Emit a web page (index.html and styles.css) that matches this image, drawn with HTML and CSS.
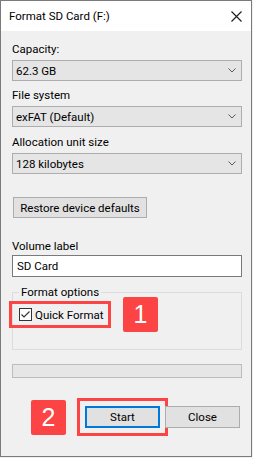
FILE: index.html
```html
<!DOCTYPE html>
<html lang="en">
<head>
  <meta charset="UTF-8">
  <title>Format SD Card (F:)</title>
  <link rel="stylesheet" href="styles.css">
</head>
<body>
  <div class="window">
    <div class="titlebar">
      <span class="title">Format SD Card (F:)</span>
      <svg class="close" width="11" height="11" viewBox="0 0 11 11">
        <path d="M0.5 0.5 L10.5 10.5 M10.5 0.5 L0.5 10.5" stroke="#1a1a1a" stroke-width="1.1" fill="none"/>
      </svg>
    </div>
    <div class="content">
      <div class="field">
        <div class="label">Capacity:</div>
        <div class="select"><span>62.3 GB</span>
          <svg width="8" height="5" viewBox="0 0 8 5"><path d="M0.5 0.5 L4 4 L7.5 0.5" stroke="#5a5a5a" fill="none"/></svg>
        </div>
      </div>
      <div class="field second">
        <div class="label">File system</div>
        <div class="select"><span>exFAT (Default)</span>
          <svg width="8" height="5" viewBox="0 0 8 5"><path d="M0.5 0.5 L4 4 L7.5 0.5" stroke="#5a5a5a" fill="none"/></svg>
        </div>
      </div>
      <div class="field third">
        <div class="label">Allocation unit size</div>
        <div class="select"><span>128 kilobytes</span>
          <svg width="8" height="5" viewBox="0 0 8 5"><path d="M0.5 0.5 L4 4 L7.5 0.5" stroke="#5a5a5a" fill="none"/></svg>
        </div>
      </div>
      <button class="btn restore">Restore device defaults</button>
      <div class="field volume">
        <div class="label">Volume label</div>
        <div class="textbox">SD Card</div>
      </div>
      <fieldset class="options">
        <legend>Format options</legend>
        <div class="opt-row">
          <span class="check">
            <svg width="13" height="13" viewBox="0 0 13 13">
              <rect x="0.5" y="0.5" width="12" height="12" fill="#fff" stroke="#333"/>
              <path d="M2.5 6.5 L5 9 L10.5 3.5" stroke="#333" stroke-width="1.2" fill="none"/>
            </svg>
            <span class="check-text">Quick Format</span>
          </span>
          <span class="badge">1</span>
        </div>
      </fieldset>
      <div class="progress"></div>
      <div class="actions">
        <span class="badge">2</span>
        <button class="btn start">Start</button>
        <button class="btn close-btn">Close</button>
      </div>
    </div>
  </div>
</body>
</html>
```

FILE: styles.css
```css
body {
  margin: 0;
  background: #f0f0f0;
  font-family: 'Roboto', 'Liberation Sans', sans-serif;
  font-size: 11.5px;
  color: #000;
}
.window {
  width: 252px;
  height: 457px;
  box-sizing: border-box;
  border: 1px solid #7a7a7a;
  background: #f0f0f0;
}
.titlebar {
  height: 30px;
  background: #fff;
  display: flex;
  align-items: center;
  justify-content: space-between;
  padding: 0 9px 0 8px;
}
.title {
  font-size: 11.5px;
  line-height: 30px;
}
.close {
  display: block;
  margin-top: 1px;
}
.content {
  padding: 11px 0 0 11px;
}
.label {
  line-height: 15px;
  height: 15px;
}
.select {
  margin-top: 3px;
  width: 230px;
  height: 21px;
  box-sizing: border-box;
  border: 1px solid #adadad;
  background: #e5e5e5;
  display: flex;
  align-items: center;
  justify-content: space-between;
  padding: 0 5px 0 3px;
}
.select svg {
  display: block;
}
.second {
  margin-top: 7px;
}
.third {
  margin-top: 8px;
}
.btn {
  font-family: inherit;
  font-size: 11.5px;
  color: #000;
  background: #e1e1e1;
  border: 1px solid #adadad;
  border-radius: 0;
  padding: 0;
  box-sizing: border-box;
  display: block;
}
.restore {
  margin-top: 23px;
  margin-left: 1px;
  width: 134px;
  height: 21px;
}
.volume {
  margin-top: 21px;
}
.textbox {
  margin-top: 1px;
  width: 230px;
  height: 22px;
  box-sizing: border-box;
  border: 1px solid #7a7a7a;
  background: #fff;
  padding-left: 4px;
  line-height: 20px;
}
.options {
  margin: 7px 0 0 0;
  padding: 0 0 17px 0;
  width: 230px;
  box-sizing: border-box;
  border: 1px solid #dcdcdc;
  min-inline-size: 0;
}
.options legend {
  margin-left: 6px;
  padding: 0 2px;
  line-height: 17px;
  height: 17px;
}
.opt-row {
  margin-top: -4px;
  display: flex;
  align-items: center;
  height: 35px;
}
.check {
  margin-left: -1px;
  width: 96px;
  height: 21px;
  box-sizing: border-box;
  padding-left: 7px;
  display: flex;
  align-items: center;
  outline: 3px solid #fc4444;
}
.check svg {
  display: block;
}
.check-text {
  margin-left: 3px;
}
.badge {
  width: 35px;
  height: 35px;
  border-radius: 2px;
  background: #fc4444;
  color: #fff;
  font-family: 'Liberation Sans', sans-serif;
  font-size: 25px;
  display: flex;
  align-items: center;
  justify-content: center;
}
.opt-row .badge {
  margin-left: 15px;
}
.progress {
  margin-top: 14px;
  width: 230px;
  height: 14px;
  box-sizing: border-box;
  border: 1px solid #bcbcbc;
  background: #e6e6e6;
}
.actions {
  margin-top: 22px;
  display: flex;
  align-items: flex-start;
  height: 35px;
}
.actions .badge {
  margin-left: 19px;
}
.start {
  margin: 6px 0 0 19px;
  width: 75px;
  height: 22px;
  border: 2px solid #0078d7;
  outline: 3px solid #fc4444;
  outline-offset: 5px;
}
.close-btn {
  margin: 6px 0 0 5px;
  width: 75px;
  height: 22px;
}
```
